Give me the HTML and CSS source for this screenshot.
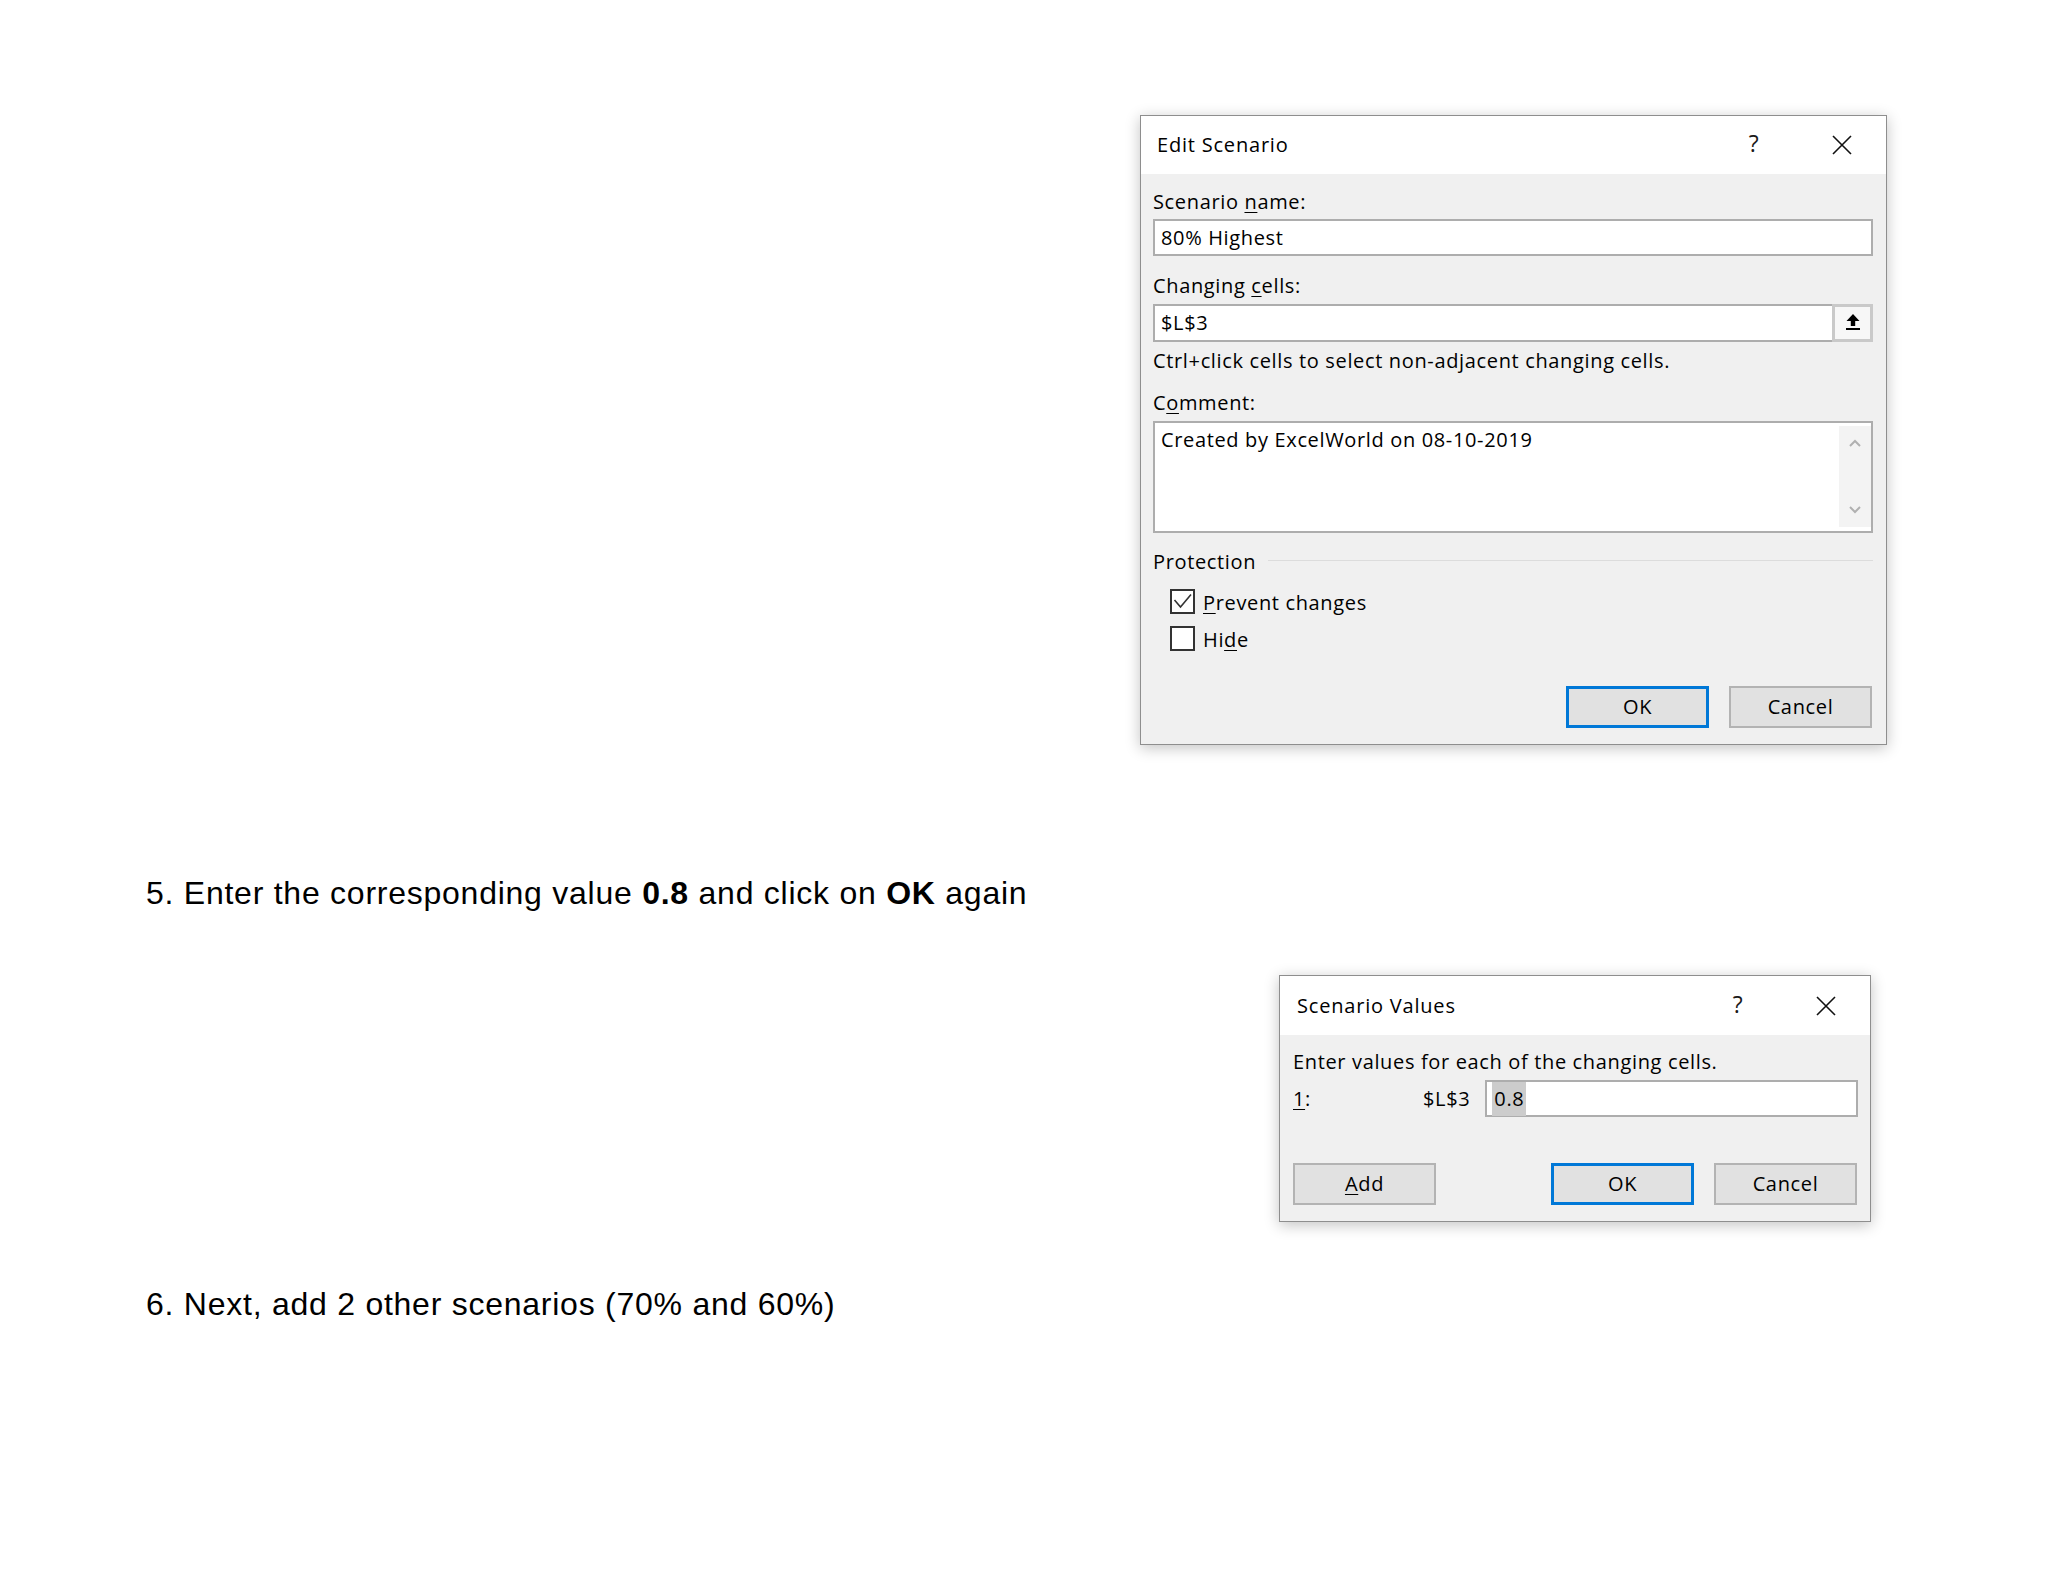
FILE: index.html
```html
<!DOCTYPE html>
<html lang="en">
<head>
<meta charset="utf-8">
<title>Scenario steps</title>
<link rel="stylesheet" href="styles.css">
</head>
<body>
<div class="page">

  <section class="dlg dlg-edit">
    <div class="titlebar">
      <div class="title">Edit Scenario</div>
      <div class="tb-btn tb-help">?</div>
      <div class="tb-btn tb-close">
        <svg width="20" height="20" viewBox="0 0 20 20"><path d="M1 1 L19 19 M19 1 L1 19" stroke="#111" stroke-width="1.6" fill="none"/></svg>
      </div>
    </div>
    <div class="body body-edit">
      <div class="label l-first">Scenario <u>n</u>ame:</div>
      <div class="field f-name"><span class="ftext">80% Highest</span></div>
      <div class="label l-gap">Changing <u>c</u>ells:</div>
      <div class="field f-cells">
        <span class="ftext">$L$3</span>
        <span class="refbtn">
          <svg width="18" height="18" viewBox="0 0 18 18"><path d="M9 1 L15.5 8 L11.2 8 L11.2 13 L6.8 13 L6.8 8 L2.5 8 Z" fill="#000"/><rect x="2" y="15" width="14" height="2" fill="#000"/></svg>
        </span>
      </div>
      <div class="hint">Ctrl+click cells to select non-adjacent changing cells.</div>
      <div class="label l-gap">C<u>o</u>mment:</div>
      <div class="memo">
        <div class="memo-text">Created by ExcelWorld on 08-10-2019</div>
        <div class="vscroll">
          <svg width="14" height="10" viewBox="0 0 14 10"><path d="M2 8 L7 3 L12 8" stroke="#b0b0b0" stroke-width="2" fill="none"/></svg>
          <svg width="14" height="10" viewBox="0 0 14 10"><path d="M2 2 L7 7 L12 2" stroke="#b0b0b0" stroke-width="2" fill="none"/></svg>
        </div>
      </div>
      <div class="group">
        <span class="group-title">Protection</span>
        <span class="group-line"></span>
      </div>
      <div class="check c-first">
        <span class="box">
          <svg width="21" height="21" viewBox="0 0 21 21"><path d="M2.5 9 L8.5 16 L19 3.5" stroke="#333" stroke-width="1.6" fill="none"/></svg>
        </span>
        <span class="check-label"><u>P</u>revent changes</span>
      </div>
      <div class="check c-second">
        <span class="box"></span>
        <span class="check-label">Hi<u>d</u>e</span>
      </div>
      <div class="buttons b-edit">
        <div class="btn btn-default">OK</div>
        <div class="btn">Cancel</div>
      </div>
    </div>
  </section>

  <p class="step step-5">5. Enter the corresponding value <b>0.8</b> and click on <b>OK</b> again</p>

  <section class="dlg dlg-values">
    <div class="titlebar tb-values">
      <div class="title">Scenario Values</div>
      <div class="tb-btn tb-help">?</div>
      <div class="tb-btn tb-close">
        <svg width="20" height="20" viewBox="0 0 20 20"><path d="M1 1 L19 19 M19 1 L1 19" stroke="#111" stroke-width="1.6" fill="none"/></svg>
      </div>
    </div>
    <div class="body body-values">
      <div class="label">Enter values for each of the changing cells.</div>
      <div class="value-row">
        <span class="idx"><u>1</u>:</span>
        <span class="ref">$L$3</span>
        <div class="field f-value"><span class="ftext"><span class="sel">0.8</span></span></div>
      </div>
      <div class="buttons b-values">
        <div class="btn"><u>A</u>dd</div>
        <div class="spacer"></div>
        <div class="btn btn-default">OK</div>
        <div class="btn">Cancel</div>
      </div>
    </div>
  </section>

  <p class="step step-6">6. Next, add 2 other scenarios (70% and 60%)</p>

</div>
</body>
</html>
```

FILE: styles.css
```css
html, body {
  margin: 0;
  padding: 0;
  background: #ffffff;
}

.page {
  padding-top: 115px;
  width: 2048px;
  min-height: 1582px;
  box-sizing: border-box;
}

/* ---------- dialogs ---------- */
.dlg {
  box-sizing: border-box;
  border: 1px solid #8e8e8e;
  background: #f0f0f0;
  box-shadow: 0 3px 14px rgba(0, 0, 0, 0.24);
  font-family: "Open Sans", "Noto Sans", sans-serif;
  font-size: 20px;
  letter-spacing: 0.65px;
  color: #000;
}

.dlg-edit {
  margin-left: 1140px;
  width: 747px;
}

.dlg-values {
  margin-left: 1279px;
  width: 592px;
  margin-top: 64px;
}

.titlebar {
  display: flex;
  align-items: center;
  height: 58px;
  background: #ffffff;
}

.tb-values {
  height: 59px;
}

.title {
  flex: 1;
  padding-left: 16px;
  font-size: 20px;
  letter-spacing: 0.8px;
  line-height: 58px;
}

.tb-values .title {
  padding-left: 17px;
  padding-top: 1px;
}

.tb-btn {
  width: 88px;
  height: 100%;
  display: flex;
  align-items: center;
  justify-content: center;
}

.tb-help {
  font-size: 23px;
  color: #1a1a1a;
  padding-bottom: 4px;
  box-sizing: border-box;
}

.tb-close svg {
  display: block;
}

.body {
  display: flex;
  flex-direction: column;
}

.body-edit {
  padding: 16px 13px 16px 12px;
}

.body-values {
  padding: 15px 12px 16px 13px;
}

.label, .hint {
  line-height: 24px;
  height: 24px;
  white-space: nowrap;
}

.l-gap {
  margin-top: 18px;
}

.hint {
  margin-top: 7px;
}

u {
  text-decoration: underline;
  text-underline-offset: 3px;
  text-decoration-thickness: 1px;
}

.field {
  box-sizing: border-box;
  display: flex;
  align-items: stretch;
  background: #ffffff;
  border: 2px solid #adadad;
}

.ftext {
  flex: 1;
  line-height: 33px;
  padding-left: 6px;
  white-space: nowrap;
}

.f-name {
  margin-top: 5px;
  height: 37px;
}

.f-cells {
  margin-top: 6px;
  height: 38px;
}

.refbtn {
  box-sizing: border-box;
  width: 41px;
  margin: -2px -2px -2px 0;
  border: 3px solid #c9c9c9;
  background: #f7f7f7;
  display: flex;
  align-items: center;
  justify-content: center;
}

.refbtn svg {
  display: block;
  margin-top: -2px;
}

.memo {
  box-sizing: border-box;
  margin-top: 6px;
  height: 112px;
  display: flex;
  background: #ffffff;
  border: 2px solid #adadad;
}

.memo-text {
  flex: 1;
  padding: 5px 0 0 6px;
  line-height: 24px;
}

.vscroll {
  width: 32px;
  margin: 3px 0 4px 0;
  background: #f3f3f3;
  display: flex;
  flex-direction: column;
  align-items: center;
  justify-content: space-between;
  padding: 12px 0 12px;
  box-sizing: border-box;
}

.vscroll svg {
  display: block;
}

.group {
  margin-top: 17px;
  display: flex;
  align-items: center;
  height: 24px;
  line-height: 24px;
}

.group-line {
  flex: 1;
  height: 1px;
  background: #dcdcdc;
  margin: -4px 0 0 12px;
}

.check {
  display: flex;
  align-items: flex-start;
  height: 28px;
  line-height: 28px;
  padding-left: 17px;
}

.c-first {
  margin-top: 15px;
}

.c-second {
  margin-top: 9px;
}

.box {
  box-sizing: border-box;
  width: 25px;
  height: 25px;
  border: 2px solid #333333;
  background: #ffffff;
  margin-right: 8px;
}

.box svg {
  display: block;
}

.buttons {
  display: flex;
  justify-content: flex-end;
  gap: 20px;
  padding-right: 1px;
}

.b-edit {
  margin-top: 32px;
}

.b-values {
  margin-top: 46px;
  padding-right: 1px;
}

.b-values .spacer {
  flex: 1;
}

.b-values .btn + .spacer + .btn {
  margin-left: -20px;
}

.btn {
  box-sizing: border-box;
  width: 143px;
  height: 42px;
  border: 2px solid #b3b3b3;
  background: #e1e1e1;
  display: flex;
  align-items: center;
  justify-content: center;
  padding-bottom: 1px;
}

.btn-default {
  border: 3px solid #0078d7;
}

.value-row {
  margin-top: 6px;
  display: flex;
  align-items: center;
  height: 37px;
}

.idx {
  width: 130px;
}

.ref {
  margin-right: 15px;
}

.f-value {
  flex: 1;
  height: 37px;
}

.f-value .ftext {
  padding-left: 5px;
}

.sel {
  background: #cccccc;
  padding: 3px 2px 4px;
}

/* ---------- document text ---------- */
.step {
  margin: 0;
  padding-left: 146px;
  font-family: "Liberation Sans", Arial, sans-serif;
  font-size: 32px;
  letter-spacing: 0.75px;
  line-height: 36px;
  color: #000;
  white-space: nowrap;
}

.step-5 {
  margin-top: 130px;
}

.step-6 {
  margin-top: 64px;
}
```
